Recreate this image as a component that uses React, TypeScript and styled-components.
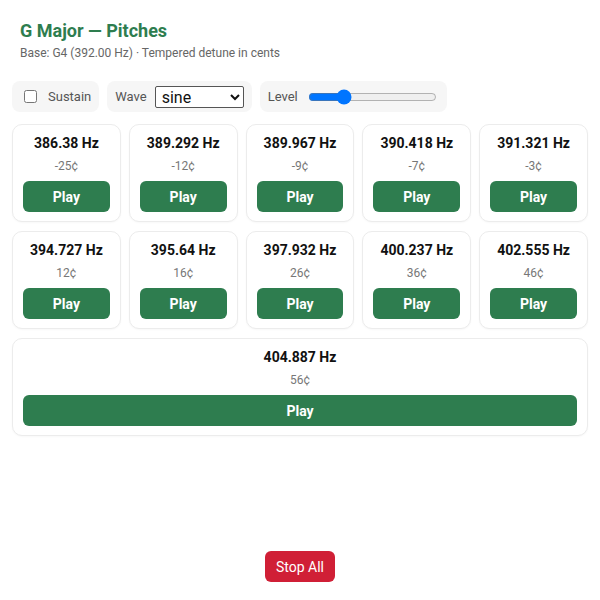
import React, { useState } from "react";
import styled, { createGlobalStyle } from "styled-components";

const Global = createGlobalStyle`
  html, body { margin: 0; padding: 0; background: #fff; }
  body { font-family: Roboto, "Noto Sans", sans-serif; color: #222; }
  * { box-sizing: border-box; }
`;

const Page = styled.div`
  min-height: 100vh;
  display: flex;
  flex-direction: column;
  padding: 12px 12px 18px;
`;

const Header = styled.header`
  padding: 8px 8px 0;
`;

const Title = styled.h1`
  margin: 0;
  font-size: 18px;
  line-height: 22px;
  font-weight: 700;
  color: #2e7d4f;
`;

const Subtitle = styled.div`
  margin-top: 3px;
  font-size: 12px;
  line-height: 16px;
  color: #666;
`;

const Controls = styled.div`
  display: flex;
  gap: 8px;
  margin-top: 20px;
  align-items: center;
`;

const ControlBox = styled.label`
  display: flex;
  align-items: center;
  gap: 8px;
  height: 31px;
  padding: 0 8px;
  background: #f6f6f6;
  border-radius: 8px;
  font-size: 13px;
  color: #555;
`;

const Check = styled.input`
  width: 13px;
  height: 13px;
  margin: 3px 3px 3px 4px;
`;

const Select = styled.select`
  width: 89px;
  height: 22px;
  font-family: Roboto, "Noto Sans", sans-serif;
  font-size: 16px;
  color: #111;
  border: 1px solid #555;
  border-radius: 2px;
  background: #fff;
  padding: 0 2px;
`;

const Range = styled.input`
  width: 129px;
  margin: 2px;
  accent-color: #0075ff;
`;

const Grid = styled.div`
  display: flex;
  flex-wrap: wrap;
  gap: 9px 8px;
  margin-top: 12px;
`;

const Card = styled.div`
  flex: 1 1 100px;
  display: flex;
  flex-direction: column;
  align-items: stretch;
  padding: 9px 10px;
  background: #fff;
  border: 1px solid #ececec;
  border-radius: 10px;
  box-shadow: 0 1px 2px rgba(0, 0, 0, 0.03);
`;

const Freq = styled.div`
  text-align: center;
  font-size: 14px;
  font-weight: 700;
  line-height: 18px;
  color: #111;
`;

const Cents = styled.div`
  text-align: center;
  font-size: 12px;
  line-height: 16px;
  color: #777;
  margin-top: 6px;
`;

const PlayButton = styled.button`
  margin-top: 7px;
  height: 31px;
  border: none;
  border-radius: 6px;
  background: #2e7d4f;
  color: #fff;
  font-family: Roboto, "Noto Sans", sans-serif;
  font-size: 14px;
  font-weight: 700;
  cursor: pointer;
`;

const Footer = styled.div`
  margin-top: auto;
  display: flex;
  justify-content: center;
`;

const StopButton = styled.button`
  height: 31px;
  padding: 0 11px;
  border: none;
  border-radius: 6px;
  background: #d01f36;
  color: #fff;
  font-family: Roboto, "Noto Sans", sans-serif;
  font-size: 14px;
  cursor: pointer;
`;

const pitches: [string, string][] = [
  ["386.38", "-25"],
  ["389.292", "-12"],
  ["389.967", "-9"],
  ["390.418", "-7"],
  ["391.321", "-3"],
  ["394.727", "12"],
  ["395.64", "16"],
  ["397.932", "26"],
  ["400.237", "36"],
  ["402.555", "46"],
  ["404.887", "56"],
];

export default function App() {
  const [level, setLevel] = useState(0.25);
  const [wave, setWave] = useState("sine");
  return (
    <Page>
      <Global />
      <Header>
        <Title>G Major — Pitches</Title>
        <Subtitle>Base: G4 (392.00 Hz) · Tempered detune in cents</Subtitle>
      </Header>
      <Controls>
        <ControlBox>
          <Check type="checkbox" />
          Sustain
        </ControlBox>
        <ControlBox>
          Wave
          <Select value={wave} onChange={(e) => setWave(e.target.value)}>
            <option value="sine">sine</option>
            <option value="square">square</option>
            <option value="sawtooth">sawtooth</option>
            <option value="triangle">triangle</option>
          </Select>
        </ControlBox>
        <ControlBox>
          Level
          <Range
            type="range"
            min={0}
            max={1}
            step={0.01}
            value={level}
            onChange={(e) => setLevel(parseFloat(e.target.value))}
          />
        </ControlBox>
      </Controls>
      <Grid>
        {pitches.map(([hz, c]) => (
          <Card key={hz}>
            <Freq>{hz} Hz</Freq>
            <Cents>{c}¢</Cents>
            <PlayButton>Play</PlayButton>
          </Card>
        ))}
      </Grid>
      <Footer>
        <StopButton>Stop All</StopButton>
      </Footer>
    </Page>
  );
}
